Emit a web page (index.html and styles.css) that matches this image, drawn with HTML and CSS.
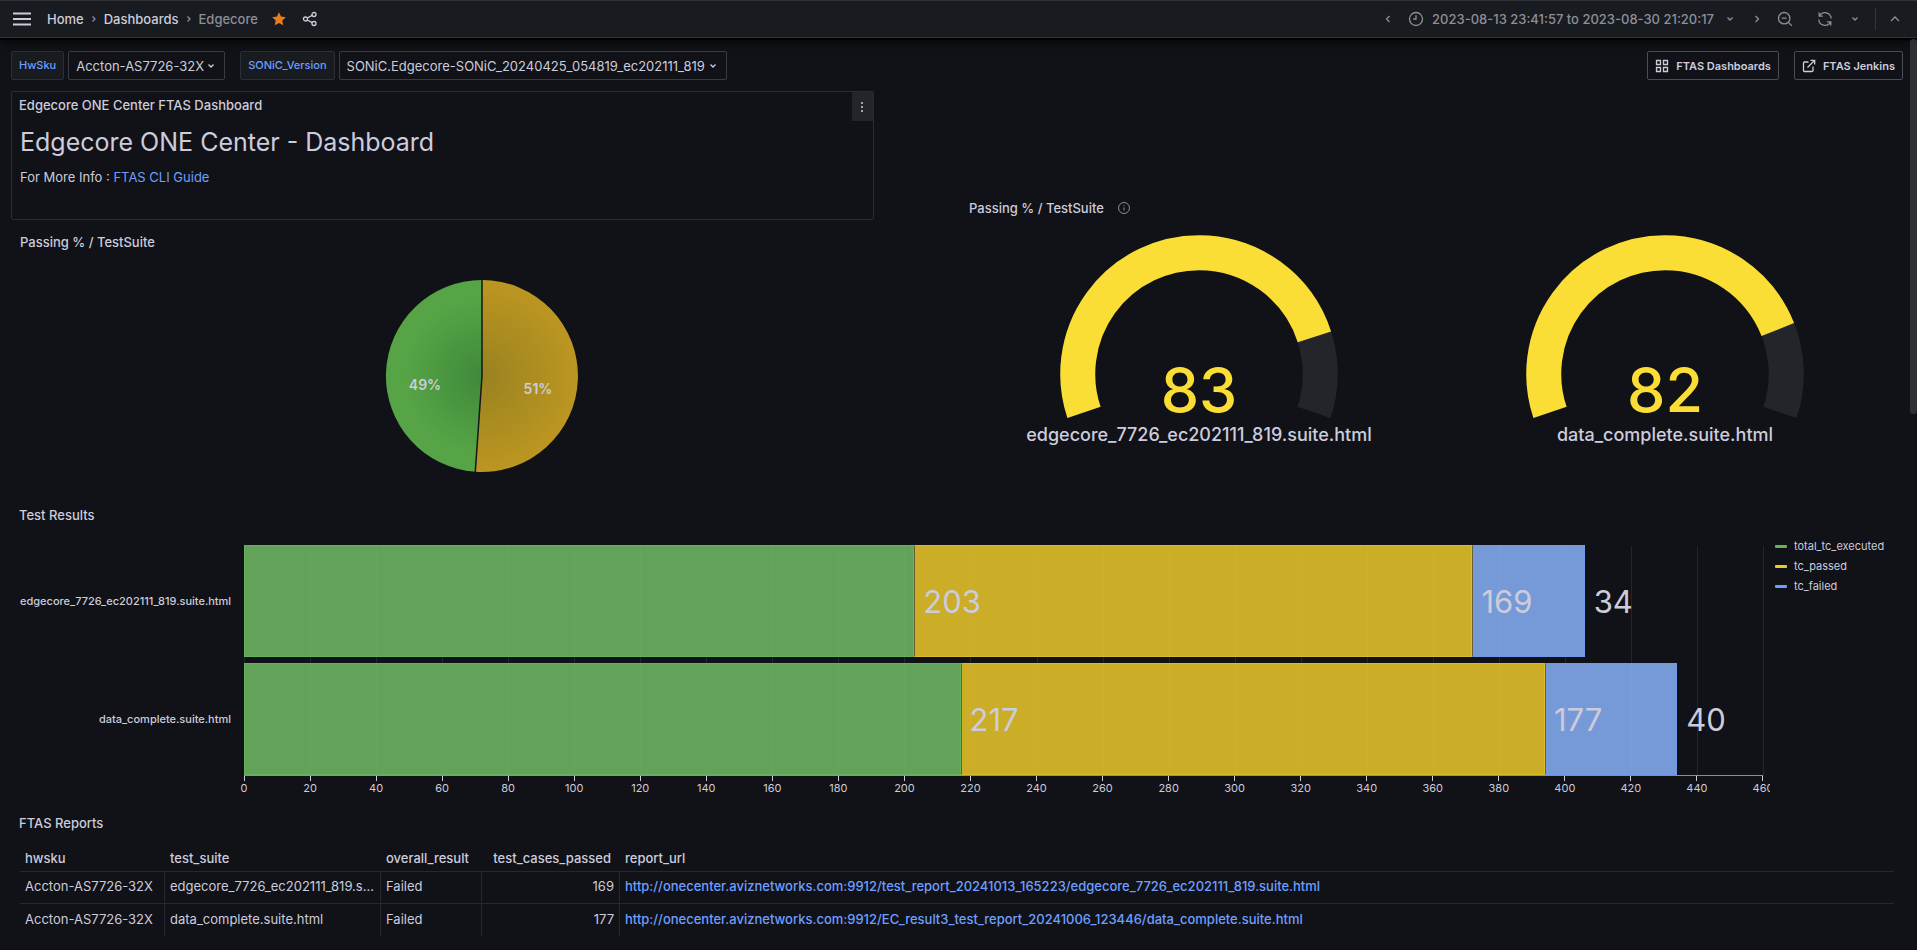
FILE: index.html
```html
<!DOCTYPE html>
<html lang="en">
<head>
<meta charset="UTF-8">
<meta name="viewport" content="width=device-width, initial-scale=1.0">
<title>Edgecore - Dashboards</title>
<link rel="stylesheet" href="styles.css">
</head>
<body>

<header class="navbar">
  <button class="icon-btn menu-btn" aria-label="Open menu">
    <svg width="20" height="16" viewBox="0 0 20 16"><path d="M1 2.5h18M1 8h18M1 13.5h18" stroke-width="1.8"/></svg>
  </button>
  <nav class="breadcrumbs" aria-label="Breadcrumbs">
    <a href="#">Home</a>
    <svg width="6" height="10" viewBox="0 0 6 10"><path d="M1.5 2.5 4 5 1.5 7.5"/></svg>
    <a href="#">Dashboards</a>
    <svg width="6" height="10" viewBox="0 0 6 10"><path d="M1.5 2.5 4 5 1.5 7.5"/></svg>
    <span class="current">Edgecore</span>
  </nav>
  <button class="icon-btn star" aria-label="Unmark as favorite">
    <svg width="16" height="16" viewBox="0 0 16 16"><path d="M8 1.2l2 4.4 4.8.6-3.5 3.3.9 4.8L8 12l-4.2 2.3.9-4.8L1.2 6.2 6 5.6z"/></svg>
  </button>
  <button class="icon-btn share" aria-label="Share dashboard">
    <svg width="16" height="16" viewBox="0 0 16 16"><circle cx="3.5" cy="8" r="2"/><circle cx="12" cy="3.5" r="2"/><circle cx="12" cy="12.5" r="2"/><path d="M5.3 7l4.9-2.6M5.3 9l4.9 2.6"/></svg>
  </button>

  <div class="time-controls">
    <button class="icon-btn prev" aria-label="Move time range backwards">
      <svg width="8" height="12" viewBox="0 0 8 12"><path d="M5.5 3 2.5 6l3 3"/></svg>
    </button>
    <button class="time-range">
      <svg width="16" height="16" viewBox="0 0 16 16"><circle cx="8" cy="8" r="6.5"/><path d="M8 4.2V8H5.2"/></svg>
      <span>2023-08-13 23:41:57 to 2023-08-30 21:20:17</span>
      <svg width="8" height="8" viewBox="0 0 8 8"><path d="M1.5 2.5 4 5l2.5-2.5"/></svg>
    </button>
    <button class="icon-btn next" aria-label="Move time range forwards">
      <svg width="8" height="12" viewBox="0 0 8 12"><path d="M2.5 3l3 3-3 3"/></svg>
    </button>
    <button class="icon-btn zoom-out" aria-label="Zoom out time range">
      <svg width="16" height="16" viewBox="0 0 16 16"><circle cx="7.2" cy="7.2" r="5.7"/><path d="M4.8 7.2h4.8M11.4 11.4l3.4 3.4"/></svg>
    </button>
    <button class="icon-btn refresh" aria-label="Refresh dashboard">
      <svg width="16" height="16" viewBox="0 0 16 16"><path d="M2.2 1.5v3.7h3.7M2.5 5A6.2 6.2 0 0 1 14.2 7.5M13.8 14.5v-3.7h-3.7M13.5 11A6.2 6.2 0 0 1 1.8 8.5"/></svg>
    </button>
    <button class="icon-btn interval" aria-label="Auto refresh interval">
      <svg width="8" height="8" viewBox="0 0 8 8"><path d="M1.5 2.5 4 5l2.5-2.5"/></svg>
    </button>
    <button class="icon-btn collapse" aria-label="Hide top bar">
      <svg width="12" height="12" viewBox="0 0 12 12"><path d="M2 8l4-4 4 4"/></svg>
    </button>
  </div>
</header>

<main>
  <div class="submenu">
    <div class="variable">
      <label for="hwsku">HwSku</label>
      <span class="select">
        <select id="hwsku"><option>Accton-AS7726-32X</option></select>
        <svg width="8" height="8" viewBox="0 0 8 8"><path d="M1.5 2.5 4 5l2.5-2.5"/></svg>
      </span>
    </div>
    <div class="variable">
      <label for="sonic">SONiC_Version</label>
      <span class="select">
        <select id="sonic"><option>SONiC.Edgecore-SONiC_20240425_054819_ec202111_819</option></select>
        <svg width="8" height="8" viewBox="0 0 8 8"><path d="M1.5 2.5 4 5l2.5-2.5"/></svg>
      </span>
    </div>
    <div class="links">
      <a class="link-btn" href="#">
        <svg width="14" height="14" viewBox="0 0 14 14"><path d="M1.5 1.5h4v4h-4zM8.5 1.5h4v4h-4zM1.5 8.5h4v4h-4zM8.5 8.5h4v4h-4z"/></svg>
        FTAS Dashboards
      </a>
      <a class="link-btn" href="#">
        <svg width="14" height="14" viewBox="0 0 14 14"><path d="M6.5 3H2.5Q1.5 3 1.5 4v7.5q0 1 1 1H10q1 0 1-1V7.5M5.5 8.5l7-7M8.5 1.3h4.2v4.2"/></svg>
        FTAS Jenkins
      </a>
    </div>
  </div>

  <div class="dashboard">
    <section class="panel intro">
      <h2>Edgecore ONE Center FTAS Dashboard</h2>
      <button class="panel-menu" aria-label="Panel menu">
        <svg width="4" height="14" viewBox="0 0 4 14"><path d="M1 2h2v2H1zM1 6h2v2H1zM1 10h2v2H1z"/></svg>
      </button>
      <h1>Edgecore ONE Center - Dashboard</h1>
      <p>For More Info : <a href="#">FTAS CLI Guide</a></p>
    </section>

    <section class="panel pie">
      <h2>Passing % / TestSuite</h2>
      <svg width="194" height="194" viewBox="-97 -97 194 194">
        <defs>
          <radialGradient id="pie-yellow" gradientUnits="userSpaceOnUse" cx="0" cy="0" r="96">
            <stop offset="0" stop-color="#998220"/>
            <stop offset="1" stop-color="#bc9621"/>
          </radialGradient>
          <radialGradient id="pie-green" gradientUnits="userSpaceOnUse" cx="0" cy="0" r="96">
            <stop offset="0" stop-color="#3f893a"/>
            <stop offset="0.8" stop-color="#56a446"/>
          </radialGradient>
        </defs>
        <path fill="url(#pie-yellow)" d="M0 0V-96A96 96 0 1 1 -6.7 95.77Z"/>
        <path fill="url(#pie-green)" d="M0 0L-6.7 95.77A96 96 0 0 1 0 -96Z"/>
        <path class="divider" d="M0 -97V0L-6.8 97"/>
        <text x="56" y="18">51%</text>
        <text x="-57" y="14">49%</text>
      </svg>
    </section>

    <section class="panel gauges">
      <h2>Passing % / TestSuite
        <svg width="14" height="14" viewBox="0 0 14 14"><circle cx="7" cy="7" r="5.5"/><path d="M7 6.5V9.5M7 4.3v1"/></svg>
      </h2>
      <div class="gauge-row">
        <div class="gauge">
          <svg width="280" height="189" viewBox="0 0 280 189">
            <path class="track" d="M25 177.4A121.25 121.25 0 1 1 255 177.4"/>
            <path class="value" pathLength="100" stroke-dasharray="83.25 100" d="M25 177.4A121.25 121.25 0 1 1 255 177.4"/>
            <text x="140" y="177">83</text>
          </svg>
          <div class="gauge-label">edgecore_7726_ec202111_819.suite.html</div>
        </div>
        <div class="gauge">
          <svg width="280" height="189" viewBox="0 0 280 189">
            <path class="track" d="M25 177.4A121.25 121.25 0 1 1 255 177.4"/>
            <path class="value" pathLength="100" stroke-dasharray="81.57 100" d="M25 177.4A121.25 121.25 0 1 1 255 177.4"/>
            <text x="140" y="177">82</text>
          </svg>
          <div class="gauge-label">data_complete.suite.html</div>
        </div>
      </div>
    </section>

    <section class="panel results">
      <h2>Test Results</h2>
      <div class="chart">
        <div class="chart-labels">
          <span>edgecore_7726_ec202111_819.suite.html</span>
          <span>data_complete.suite.html</span>
        </div>
        <div class="plot">
          <div class="bars">
            <div class="bar-row">
              <div class="bar green" style="width: 44.13%"><span>203</span></div>
              <div class="bar yellow" style="width: 36.74%"><span>169</span></div>
              <div class="bar blue" style="width: 7.39%"><span>34</span></div>
            </div>
            <div class="bar-row">
              <div class="bar green" style="width: 47.17%"><span>217</span></div>
              <div class="bar yellow" style="width: 38.48%"><span>177</span></div>
              <div class="bar blue" style="width: 8.7%"><span>40</span></div>
            </div>
          </div>
          <ul class="axis">
            <li>0</li><li>20</li><li>40</li><li>60</li><li>80</li><li>100</li>
            <li>120</li><li>140</li><li>160</li><li>180</li><li>200</li><li>220</li>
            <li>240</li><li>260</li><li>280</li><li>300</li><li>320</li><li>340</li>
            <li>360</li><li>380</li><li>400</li><li>420</li><li>440</li><li>460</li>
          </ul>
        </div>
        <ul class="legend">
          <li class="green">total_tc_executed</li>
          <li class="yellow">tc_passed</li>
          <li class="blue">tc_failed</li>
        </ul>
      </div>
    </section>

    <section class="panel reports">
      <h2>FTAS Reports</h2>
      <table>
        <colgroup>
          <col class="col-hwsku"><col class="col-suite"><col class="col-result"><col class="col-cases"><col>
        </colgroup>
        <thead>
          <tr>
            <th>hwsku</th>
            <th>test_suite</th>
            <th>overall_result</th>
            <th class="num">test_cases_passed</th>
            <th>report_url</th>
          </tr>
        </thead>
        <tbody>
          <tr>
            <td>Accton-AS7726-32X</td>
            <td>edgecore_7726_ec202111_819.suite.html</td>
            <td>Failed</td>
            <td class="num">169</td>
            <td><a href="#">http://onecenter.aviznetworks.com:9912/test_report_20241013_165223/edgecore_7726_ec202111_819.suite.html</a></td>
          </tr>
          <tr>
            <td>Accton-AS7726-32X</td>
            <td>data_complete.suite.html</td>
            <td>Failed</td>
            <td class="num">177</td>
            <td><a href="#">http://onecenter.aviznetworks.com:9912/EC_result3_test_report_20241006_123446/data_complete.suite.html</a></td>
          </tr>
        </tbody>
      </table>
    </section>
  </div>
</main>
<div class="scrollbar"></div>

</body>
</html>
```
FILE: styles.css
```css
* {
  box-sizing: border-box;
}
body {
  margin: 0;
  background: #111217;
  color: #ccccdc;
  font-family: Inter, "Liberation Sans", sans-serif;
  font-size: 13px;
  line-height: 20px;
}
h1, h2, p, ul {
  margin: 0;
  padding: 0;
  font-weight: 400;
}
ul {
  list-style: none;
}
a {
  color: #6e9fff;
  text-decoration: none;
}
button {
  padding: 0;
  border: none;
  background: none;
  color: inherit;
  font: inherit;
  cursor: pointer;
}
svg {
  display: block;
  flex: none;
  fill: none;
  stroke: currentColor;
  stroke-width: 1.3;
}

/* Top bar */
.navbar {
  position: relative;
  display: flex;
  align-items: center;
  height: 38px;
  padding: 0 16px 0 12px;
  background: #181b1f;
  border-top: 1px solid #303238;
  border-bottom: 1px solid #303238;
  box-shadow: 0 2px 1px #000, 0 6px 8px rgba(0, 0, 0, 0.4);
}
.breadcrumbs {
  display: flex;
  align-items: center;
  gap: 7px;
  margin: 0 13px 0 15px;
  font-weight: 500;
}
.breadcrumbs a {
  color: #ccccdc;
}
.breadcrumbs svg, .breadcrumbs .current {
  color: #8e8e9a;
}
.star svg {
  fill: #eb7b18;
  stroke: none;
}
.share {
  margin-left: 15px;
}
.time-controls {
  display: flex;
  align-items: center;
  height: 100%;
  margin-left: auto;
  color: #8e8e9a;
}
.time-range {
  display: flex;
  align-items: center;
  gap: 8px;
  margin: 0 19px 0 16px;
  font-weight: 500;
}
.time-range svg:last-child {
  margin-left: 4px;
}
.zoom-out {
  margin-left: 16px;
}
.refresh {
  margin: 0 18px 0 24px;
}
.collapse {
  display: flex;
  align-items: center;
  height: 22px;
  margin-left: 16px;
  padding-left: 13px;
  border-left: 1px solid #33353c;
}

/* Variables and links */
main {
  padding: 13px 14px 8px 11px;
}
.submenu {
  display: flex;
  gap: 15px;
  margin-bottom: 11px;
}
.variable {
  display: flex;
  gap: 4px;
  height: 29px;
}
.variable label {
  padding: 3px 7px;
  border: 1px solid #2d2f36;
  border-radius: 2px;
  background: #181b1f;
  color: #6e9fff;
  font-size: 11px;
  font-weight: 500;
}
.select {
  position: relative;
  display: flex;
}
.select select {
  appearance: none;
  padding: 0 20px 0 7px;
  border: 1px solid #3a3b44;
  border-radius: 2px;
  background: #111217;
  color: #ccccdc;
  font: inherit;
}
.select svg {
  position: absolute;
  top: 11px;
  right: 10px;
  pointer-events: none;
}
.links {
  display: flex;
  gap: 15px;
  margin-left: auto;
}
.link-btn {
  display: flex;
  align-items: center;
  gap: 7px;
  height: 29px;
  padding: 0 7px;
  border: 1px solid #4b4c54;
  border-radius: 2px;
  color: #ccccdc;
  font-size: 11px;
  font-weight: 600;
}

/* Panels */
.dashboard {
  display: grid;
  grid-template-columns: repeat(24, 1fr);
  grid-template-rows: 95px 26px 265px 300px auto;
  gap: 8px;
}
.panel {
  position: relative;
  min-width: 0;
  border: 1px solid transparent;
}
.panel h2 {
  display: flex;
  align-items: center;
  gap: 13px;
  height: 26px;
  padding-left: 7px;
  font-size: 13px;
  font-weight: 500;
}
.intro {
  grid-area: 1 / 1 / 3 / 12;
  border-color: #2b2c32;
  border-radius: 2px;
}
.intro h1 {
  margin-top: 8px;
  padding-left: 8px;
  font-size: 25px;
  line-height: 32px;
}
.intro p {
  margin-top: 9px;
  padding-left: 8px;
}
.panel-menu {
  position: absolute;
  top: 0;
  right: 0;
  display: flex;
  align-items: center;
  justify-content: center;
  width: 21px;
  height: 29px;
  background: #24252b;
}
.panel-menu svg {
  fill: #a5a5b2;
  stroke: none;
}

/* Pie */
.pie {
  grid-area: 3 / 1 / 4 / 13;
  padding-left: 1px;
}
.pie > svg {
  margin: 24px auto 0;
  stroke: none;
}
.pie .divider {
  stroke: #16171b;
  stroke-width: 1.5;
}
.pie text {
  fill: #ccccdc;
  font-size: 14px;
  font-weight: 600;
  text-anchor: middle;
}

/* Gauges */
.gauges {
  grid-area: 2 / 13 / 4 / 25;
}
.gauges h2 svg {
  color: #8e8e9a;
  stroke-width: 1;
}
.gauge-row {
  display: grid;
  grid-template-columns: 1fr 1fr;
  padding: 14px 4px 0;
}
.gauge {
  display: flex;
  flex-direction: column;
  align-items: center;
}
.gauge svg {
  overflow: visible;
  stroke-width: 35;
}
.gauge .track {
  stroke: #24252a;
}
.gauge .value {
  stroke: #fade35;
}
.gauge text {
  fill: #fade35;
  stroke: none;
  font-size: 61px;
  font-weight: 500;
  text-anchor: middle;
}
.gauge-label {
  font-size: 18px;
  font-weight: 500;
  line-height: 22px;
}

/* Bar chart */
.results {
  grid-area: 4 / 1 / 5 / 25;
}
.chart {
  display: grid;
  grid-template-columns: 211px 1fr 127px;
  column-gap: 12px;
  padding-top: 17px;
  padding-left: 8px;
  font-size: 11px;
  font-weight: 500;
}
.chart-labels {
  display: flex;
  flex-direction: column;
  gap: 6px;
  text-align: right;
}
.chart-labels span {
  line-height: 112px;
}
.bars {
  position: relative;
  z-index: 1;
  display: flex;
  flex-direction: column;
  gap: 6px;
}
.bar-row {
  display: flex;
}
.bar {
  position: relative;
  height: 112px;
  border: 1px solid;
}
.bar.green {
  z-index: 3;
  border-color: #64b35a;
  background: rgba(115, 191, 105, 0.83);
}
.bar.yellow {
  z-index: 2;
  border-color: #dcbb27;
  background: rgba(242, 204, 44, 0.83);
}
.bar.blue {
  z-index: 1;
  border-color: #6d9bea;
  background: rgba(138, 182, 255, 0.83);
}
/* darker seam where two segments meet */
.bar + .bar {
  border-left-color: #6b6130;
}
.bar span {
  position: absolute;
  left: 100%;
  padding-left: 10px;
  font-size: 31px;
  font-weight: 400;
  line-height: 112px;
}
.plot {
  margin-left: 1px;
}
.axis {
  display: grid;
  grid-template-columns: repeat(24, 1fr);
  width: calc(100% * 24 / 23);
  margin-left: calc(-100% / 46);
  text-align: center;
}
.axis li {
  position: relative;
  line-height: 14px;
}
.axis li::before {
  content: "";
  display: block;
  width: 1px;
  height: 5px;
  margin: 0 auto;
  background: #ccccdc;
}
/* grid line above each tick */
.axis li::after {
  content: "";
  position: absolute;
  bottom: 100%;
  left: 50%;
  width: 1px;
  height: 230px;
  background: #24252a;
}
.axis li:last-child {
  clip-path: inset(-240px calc(50% - 7px) 0 0);
}
.bars::after {
  content: "";
  height: 1px;
  margin-top: -6px;
  background: #8e8e9a;
}
.legend li {
  display: flex;
  align-items: center;
  gap: 7px;
  height: 20px;
}
.legend {
  margin-top: -9px;
}
.legend li::before {
  content: "";
  width: 12px;
  height: 3px;
  border-radius: 1px;
}
.legend .green::before {
  background: #64b35a;
}
.legend .yellow::before {
  background: #eccb2e;
}
.legend .blue::before {
  background: #6e9fff;
}

/* Table */
.reports {
  grid-area: 5 / 1 / 6 / 25;
}
.reports table {
  width: calc(100% - 16px);
  margin: 9px 0 0 8px;
  border-collapse: separate;
  border-spacing: 0;
  table-layout: fixed;
}
.col-hwsku {
  width: 145px;
}
.col-suite {
  width: 216px;
}
.col-result {
  width: 101px;
}
.col-cases {
  width: 138px;
}
th, td {
  padding: 0 5px;
  overflow: hidden;
  text-align: left;
  text-overflow: ellipsis;
  white-space: nowrap;
}
th {
  height: 27px;
  border-bottom: 1px solid #27282e;
  font-weight: 500;
}
th.num {
  padding-right: 9px;
}
td {
  height: 32px;
  padding-bottom: 3px;
  border-right: 1px solid #27282e;
}
td:last-child {
  border-right: none;
}
tbody tr:first-child td {
  border-bottom: 1px solid #27282e;
}
.num {
  text-align: right;
}
td a {
  font-weight: 500;
}

.scrollbar {
  position: fixed;
  top: 39px;
  right: 0;
  width: 7px;
  height: 375px;
  border-radius: 4px;
  background: #2e2f36;
}
```
